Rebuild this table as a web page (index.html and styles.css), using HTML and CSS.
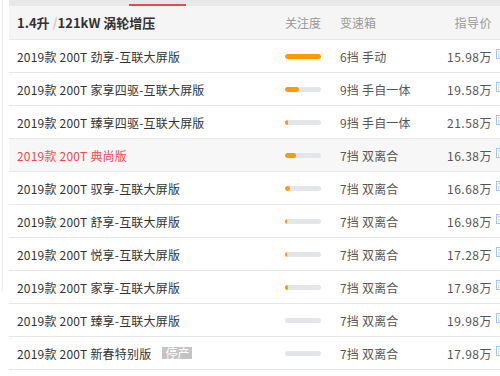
FILE: index.html
```html
<!DOCTYPE html>
<html lang="zh-CN">
<head>
<meta charset="utf-8">
<link rel="stylesheet" href="styles.css">
</head>
<body>
<div class="page">
  <div class="gutter"><div class="shadow"></div></div>
  <div class="panel">
    <div class="tabbar"><span class="tab-active"></span></div>
    <div class="row head">
      <div class="c-name"><b>1.4升 <span class="slash">/</span>121kW 涡轮增压</b></div>
      <div class="c-att">关注度</div>
      <div class="c-trans">变速箱</div>
      <div class="c-price">指导价</div>
    </div>

    <div class="row">
      <div class="c-name">2019款 200T 劲享-互联大屏版</div>
      <div class="c-att"><div class="bar"><div class="fill" style="width:100%"></div></div></div>
      <div class="c-trans">6挡 手动</div>
      <div class="c-price">15.98万<svg class="calc" viewBox="0 0 8 10"><rect x="0.5" y="0.5" width="7" height="9" fill="#fff" stroke="#aac4e0"/><rect x="2" y="2" width="4" height="1.5" fill="#c7d9ee"/><rect x="2" y="5" width="1.5" height="1.5" fill="#c7d9ee"/><rect x="4.5" y="5" width="1.5" height="1.5" fill="#c7d9ee"/><rect x="2" y="7" width="1.5" height="1.5" fill="#c7d9ee"/><rect x="4.5" y="7" width="1.5" height="1.5" fill="#c7d9ee"/></svg></div>
    </div>
    <div class="row">
      <div class="c-name">2019款 200T 家享四驱-互联大屏版</div>
      <div class="c-att"><div class="bar"><div class="fill" style="width:38%"></div></div></div>
      <div class="c-trans">9挡 手自一体</div>
      <div class="c-price">19.58万<svg class="calc" viewBox="0 0 8 10"><rect x="0.5" y="0.5" width="7" height="9" fill="#fff" stroke="#aac4e0"/><rect x="2" y="2" width="4" height="1.5" fill="#c7d9ee"/><rect x="2" y="5" width="1.5" height="1.5" fill="#c7d9ee"/><rect x="4.5" y="5" width="1.5" height="1.5" fill="#c7d9ee"/><rect x="2" y="7" width="1.5" height="1.5" fill="#c7d9ee"/><rect x="4.5" y="7" width="1.5" height="1.5" fill="#c7d9ee"/></svg></div>
    </div>
    <div class="row">
      <div class="c-name">2019款 200T 臻享四驱-互联大屏版</div>
      <div class="c-att"><div class="bar"><div class="fill" style="width:8%"></div></div></div>
      <div class="c-trans">9挡 手自一体</div>
      <div class="c-price">21.58万<svg class="calc" viewBox="0 0 8 10"><rect x="0.5" y="0.5" width="7" height="9" fill="#fff" stroke="#aac4e0"/><rect x="2" y="2" width="4" height="1.5" fill="#c7d9ee"/><rect x="2" y="5" width="1.5" height="1.5" fill="#c7d9ee"/><rect x="4.5" y="5" width="1.5" height="1.5" fill="#c7d9ee"/><rect x="2" y="7" width="1.5" height="1.5" fill="#c7d9ee"/><rect x="4.5" y="7" width="1.5" height="1.5" fill="#c7d9ee"/></svg></div>
    </div>
    <div class="row hl">
      <div class="c-name red">2019款 200T 典尚版</div>
      <div class="c-att"><div class="bar"><div class="fill" style="width:30%"></div></div></div>
      <div class="c-trans">7挡 双离合</div>
      <div class="c-price">16.38万<svg class="calc" viewBox="0 0 8 10"><rect x="0.5" y="0.5" width="7" height="9" fill="#fff" stroke="#aac4e0"/><rect x="2" y="2" width="4" height="1.5" fill="#c7d9ee"/><rect x="2" y="5" width="1.5" height="1.5" fill="#c7d9ee"/><rect x="4.5" y="5" width="1.5" height="1.5" fill="#c7d9ee"/><rect x="2" y="7" width="1.5" height="1.5" fill="#c7d9ee"/><rect x="4.5" y="7" width="1.5" height="1.5" fill="#c7d9ee"/></svg></div>
    </div>
    <div class="row">
      <div class="c-name">2019款 200T 驭享-互联大屏版</div>
      <div class="c-att"><div class="bar"><div class="fill" style="width:13%"></div></div></div>
      <div class="c-trans">7挡 双离合</div>
      <div class="c-price">16.68万<svg class="calc" viewBox="0 0 8 10"><rect x="0.5" y="0.5" width="7" height="9" fill="#fff" stroke="#aac4e0"/><rect x="2" y="2" width="4" height="1.5" fill="#c7d9ee"/><rect x="2" y="5" width="1.5" height="1.5" fill="#c7d9ee"/><rect x="4.5" y="5" width="1.5" height="1.5" fill="#c7d9ee"/><rect x="2" y="7" width="1.5" height="1.5" fill="#c7d9ee"/><rect x="4.5" y="7" width="1.5" height="1.5" fill="#c7d9ee"/></svg></div>
    </div>
    <div class="row">
      <div class="c-name">2019款 200T 舒享-互联大屏版</div>
      <div class="c-att"><div class="bar"><div class="fill" style="width:6%"></div></div></div>
      <div class="c-trans">7挡 双离合</div>
      <div class="c-price">16.98万<svg class="calc" viewBox="0 0 8 10"><rect x="0.5" y="0.5" width="7" height="9" fill="#fff" stroke="#aac4e0"/><rect x="2" y="2" width="4" height="1.5" fill="#c7d9ee"/><rect x="2" y="5" width="1.5" height="1.5" fill="#c7d9ee"/><rect x="4.5" y="5" width="1.5" height="1.5" fill="#c7d9ee"/><rect x="2" y="7" width="1.5" height="1.5" fill="#c7d9ee"/><rect x="4.5" y="7" width="1.5" height="1.5" fill="#c7d9ee"/></svg></div>
    </div>
    <div class="row">
      <div class="c-name">2019款 200T 悦享-互联大屏版</div>
      <div class="c-att"><div class="bar"><div class="fill" style="width:6%"></div></div></div>
      <div class="c-trans">7挡 双离合</div>
      <div class="c-price">17.28万<svg class="calc" viewBox="0 0 8 10"><rect x="0.5" y="0.5" width="7" height="9" fill="#fff" stroke="#aac4e0"/><rect x="2" y="2" width="4" height="1.5" fill="#c7d9ee"/><rect x="2" y="5" width="1.5" height="1.5" fill="#c7d9ee"/><rect x="4.5" y="5" width="1.5" height="1.5" fill="#c7d9ee"/><rect x="2" y="7" width="1.5" height="1.5" fill="#c7d9ee"/><rect x="4.5" y="7" width="1.5" height="1.5" fill="#c7d9ee"/></svg></div>
    </div>
    <div class="row">
      <div class="c-name">2019款 200T 家享-互联大屏版</div>
      <div class="c-att"><div class="bar"><div class="fill" style="width:9%"></div></div></div>
      <div class="c-trans">7挡 双离合</div>
      <div class="c-price">17.98万<svg class="calc" viewBox="0 0 8 10"><rect x="0.5" y="0.5" width="7" height="9" fill="#fff" stroke="#aac4e0"/><rect x="2" y="2" width="4" height="1.5" fill="#c7d9ee"/><rect x="2" y="5" width="1.5" height="1.5" fill="#c7d9ee"/><rect x="4.5" y="5" width="1.5" height="1.5" fill="#c7d9ee"/><rect x="2" y="7" width="1.5" height="1.5" fill="#c7d9ee"/><rect x="4.5" y="7" width="1.5" height="1.5" fill="#c7d9ee"/></svg></div>
    </div>
    <div class="row">
      <div class="c-name">2019款 200T 臻享-互联大屏版</div>
      <div class="c-att"><div class="bar"></div></div>
      <div class="c-trans">7挡 双离合</div>
      <div class="c-price">19.98万<svg class="calc" viewBox="0 0 8 10"><rect x="0.5" y="0.5" width="7" height="9" fill="#fff" stroke="#aac4e0"/><rect x="2" y="2" width="4" height="1.5" fill="#c7d9ee"/><rect x="2" y="5" width="1.5" height="1.5" fill="#c7d9ee"/><rect x="4.5" y="5" width="1.5" height="1.5" fill="#c7d9ee"/><rect x="2" y="7" width="1.5" height="1.5" fill="#c7d9ee"/><rect x="4.5" y="7" width="1.5" height="1.5" fill="#c7d9ee"/></svg></div>
    </div>
    <div class="row">
      <div class="c-name">2019款 200T 新春特别版<span class="badge">停产</span></div>
      <div class="c-att"><div class="bar"></div></div>
      <div class="c-trans">7挡 双离合</div>
      <div class="c-price">17.98万<svg class="calc" viewBox="0 0 8 10"><rect x="0.5" y="0.5" width="7" height="9" fill="#fff" stroke="#aac4e0"/><rect x="2" y="2" width="4" height="1.5" fill="#c7d9ee"/><rect x="2" y="5" width="1.5" height="1.5" fill="#c7d9ee"/><rect x="4.5" y="5" width="1.5" height="1.5" fill="#c7d9ee"/><rect x="2" y="7" width="1.5" height="1.5" fill="#c7d9ee"/><rect x="4.5" y="7" width="1.5" height="1.5" fill="#c7d9ee"/></svg></div>
    </div>
  </div>
</div>
</body>
</html>
```
FILE: styles.css
```css
html, body {
  margin: 0;
  padding: 0;
  background: #fff;
  overflow: hidden;
}
body {
  font-family: "Microsoft YaHei", "Noto Sans CJK SC", "Liberation Sans", sans-serif;
  font-size: 12px;
  color: #333;
}
.page {
  display: flex;
  width: 500px;
  height: 376px;
  overflow: hidden;
}
.gutter {
  width: 9px;
  flex: none;
  padding-left: 1px;
  box-sizing: border-box;
}
.shadow {
  width: 2px;
  height: 292px;
  background: linear-gradient(to right, #fff, #ececec);
}
.panel {
  width: 520px;
  flex: none;
}
.tabbar {
  height: 6px;
  background: #e8e8e8;
  display: flex;
  align-items: flex-end;
  padding-left: 120px;
}
.tab-active {
  display: block;
  width: 57px;
  height: 2px;
  background: #f0474f;
}
.row {
  display: flex;
  align-items: center;
  height: 32px;
  border-bottom: 1px solid #e8e8e8;
  white-space: nowrap;
  letter-spacing: 0.2px;
}
.row.head {
  height: 33px;
  background: #f5f5f5;
  color: #999;
  letter-spacing: 0;
}
.row.head b {
  color: #333;
  font-size: 13px;
}
.slash {
  color: #ccc;
}
.row.hl {
  background: #f7f7f7;
}
.c-name {
  width: 268px;
  padding-left: 8px;
  flex: none;
  display: flex;
  align-items: center;
}
.red {
  color: #f4474f;
}
.c-att {
  width: 55px;
  flex: none;
}
.c-trans {
  width: 100px;
  flex: none;
  color: #555;
}
.row.head .c-trans, .row.head .c-att, .row.head .c-price {
  color: #999;
}
.c-price {
  width: 52px;
  flex: none;
  display: flex;
  align-items: center;
  justify-content: flex-end;
  color: #555;
  position: relative;
  letter-spacing: 0.5px;
}
.row.head .c-price {
  letter-spacing: 0.5px;
}
.calc {
  position: absolute;
  left: 56px;
  top: 1px;
  width: 8px;
  height: 10px;
}
.bar {
  width: 36px;
  height: 5px;
  border-radius: 3px;
  background: #e3e5e8;
  overflow: hidden;
}
.fill {
  height: 100%;
  background: #ff9a00;
  border-radius: 3px;
}
.badge {
  margin-left: 11px;
  background: #c4c4c4;
  color: #fff;
  font-size: 12px;
  line-height: 12px;
  padding: 0 3px;
  letter-spacing: 0;
}
```
